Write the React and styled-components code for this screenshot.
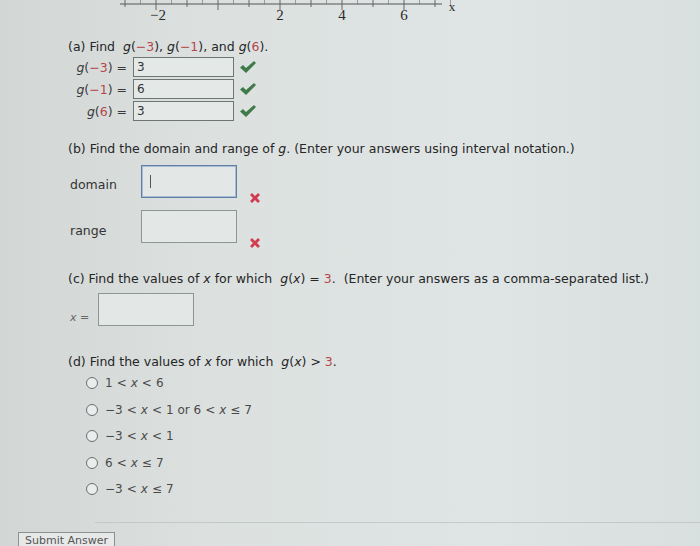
import React from "react";
import styled, { createGlobalStyle } from "styled-components";

const GlobalStyle = createGlobalStyle`
  html, body {
    margin: 0;
    padding: 0;
    background: #dbe1e0;
  }
  body {
    font-family: "DejaVu Sans", Verdana, sans-serif;
    color: #262626;
    overflow: hidden;
  }
`;

const Page = styled.div`
  width: 700px;
  height: 546px;
  position: relative;
  overflow: hidden;
  background: linear-gradient(90deg, #d2d6d5 0%, #dce1e0 30%, #dfe5e4 70%, #d8dfdf 100%);
`;

const Content = styled.div`
  padding-left: 68px;
  font-size: 12.5px;
`;

const Line = styled.div`
  height: 18px;
  line-height: 18px;
  margin-top: ${(p) => p.$mt || 0}px;
  white-space: nowrap;
`;

const G = styled.i`
  font-style: italic;
`;

const Op = styled.span`
  margin: 0 4px;
`;

const Red = styled.span`
  color: #b5464c;
`;

const EvalRows = styled.div`
  display: flex;
  flex-direction: column;
  gap: 2px;
  margin-top: 1px;
`;

const EvalRow = styled.div`
  display: grid;
  grid-template-columns: 59px 100px 24px;
  align-items: center;
  height: 20px;
  column-gap: 6px;
`;

const EvalLabel = styled.span`
  text-align: right;
  white-space: nowrap;
  color: #3a3a3a;
`;

const SmallBox = styled.div`
  height: 18px;
  width: 96px;
  border: 1px solid #6e7674;
  background: #e4e8e7;
  font-size: 12px;
  line-height: 18px;
  padding-left: 3px;
  color: #333;
`;

const AnswerRow = styled.div`
  display: flex;
  align-items: center;
  margin-top: ${(p) => p.$mt || 0}px;
  height: 33px;
`;

const AnswerLabel = styled.span`
  width: ${(p) => p.$w}px;
  padding-left: 2px;
  box-sizing: border-box;
  position: relative;
  top: ${(p) => p.$dy || 0}px;
  color: ${(p) => (p.$muted ? "#666" : "#333")};
  font-size: ${(p) => p.$fs || 12.5}px;
`;

const BigBox = styled.div`
  width: 96px;
  height: 33px;
  box-sizing: border-box;
  border: 1px solid ${(p) => (p.$focus ? "#5f7fa6" : "#8e9694")};
  box-shadow: ${(p) => (p.$focus ? "inset 0 0 0 1px #a9bdd2" : "none")};
  background: #e3e8e7;
  position: relative;
`;

const Caret = styled.div`
  position: absolute;
  left: 8px;
  top: 9px;
  width: 1px;
  height: 13px;
  background: #555;
`;

const Mark = styled.svg`
  margin-left: 12px;
  align-self: flex-end;
  margin-bottom: -6px;
`;

const Options = styled.div`
  display: flex;
  flex-direction: column;
  gap: 8.5px;
  margin-top: 3px;
  margin-left: 18px;
`;

const Option = styled.label`
  display: flex;
  align-items: center;
  height: 18px;
  font-size: 12px;
  color: #4a4a4a;
  white-space: pre;
`;

const Radio = styled.span`
  width: 10px;
  height: 10px;
  border: 1.5px solid #6a6f6e;
  border-radius: 50%;
  background: #e9eded;
  margin-right: 7px;
`;

const Rule = styled.div`
  position: absolute;
  left: 95px;
  right: 0;
  top: 522px;
  height: 1px;
  background: #c3c9c8;
`;

const SubmitButton = styled.div`
  position: absolute;
  left: 18px;
  top: 532px;
  width: 97px;
  height: 26px;
  box-sizing: border-box;
  border: 1px solid #8c9190;
  background: #e6e9e8;
  font-size: 11px;
  line-height: 12px;
  padding: 2px 6px;
  color: #555;
  white-space: nowrap;
`;

const Axis = () => {
  const x0 = 280 - 2 * 31;
  const ticks = [];
  for (let u = -3; u <= 7; u++) ticks.push(u);
  return (
    <svg width="700" height="30" style={{ display: "block" }}>
      <line x1="120" y1="4" x2="442" y2="4" stroke="#555" strokeWidth="1" />
      {ticks.map((u) => (
        <line
          key={u}
          x1={x0 + u * 31}
          y1="0"
          x2={x0 + u * 31}
          y2={u % 2 === 0 ? 10 : 7}
          stroke="#666"
          strokeWidth="1"
        />
      ))}
      {ticks.map((u) => (
        <line key={"h" + u} x1={x0 + u * 31 + 15.5} y1="0" x2={x0 + u * 31 + 15.5} y2="5" stroke="#888" strokeWidth="0.8" />
      ))}
      <g fontFamily="'Liberation Serif', serif" fontSize="15" fill="#2a2a2a" textAnchor="middle">
        <text x={x0 - 2 * 31 + 2} y="20">−2</text>
        <text x={x0 + 2 * 31} y="20">2</text>
        <text x={x0 + 4 * 31} y="20">4</text>
        <text x={x0 + 6 * 31} y="20">6</text>
        <text x="452" y="11" fontSize="13">x</text>
      </g>
    </svg>
  );
};

const Check = () => (
  <svg width="18" height="14" viewBox="0 0 18 14">
    <path d="M1 7.5 L4 5 L7 8 L15 1 L17 3 L7 13 Z" fill="#3f7b48" />
  </svg>
);

const Cross = () => (
  <Mark width="12" height="12" viewBox="0 0 12 12">
    <path d="M1 3 L3 1 L6 4 L9 1 L11 3 L8 6 L11 9 L9 11 L6 8 L3 11 L1 9 L4 6 Z" fill="#d23b50" />
  </Mark>
);

const evals = [
  { arg: "−3", val: "3" },
  { arg: "−1", val: "6" },
  { arg: "6", val: "3" },
];

const Lt = () => <Op>&lt;</Op>;
const Le = () => <Op>≤</Op>;
const X = () => <G>x</G>;

const options = [
  <>1<Lt /><X /><Lt />6</>,
  <>−3<Lt /><X /><Lt />1 or 6<Lt /><X /><Le />7</>,
  <>−3<Lt /><X /><Lt />1</>,
  <>6<Lt /><X /><Le />7</>,
  <>−3<Lt /><X /><Le />7</>,
];

export default function App() {
  return (
    <Page>
      <GlobalStyle />
      <Axis />
      <Content>
        <Line $mt={8}>
          (a) Find&nbsp; <G>g</G>(<Red>−3</Red>), <G>g</G>(<Red>−1</Red>), and <G>g</G>(<Red>6</Red>).
        </Line>
        <EvalRows>
          {evals.map((e) => (
            <EvalRow key={e.arg}>
              <EvalLabel>
                <G>g</G>(<Red>{e.arg}</Red>) =
              </EvalLabel>
              <SmallBox>{e.val}</SmallBox>
              <Check />
            </EvalRow>
          ))}
        </EvalRows>

        <Line $mt={19}>
          (b) Find the domain and range of <G>g</G>. (Enter your answers using interval notation.)
        </Line>
        <AnswerRow $mt={7}>
          <AnswerLabel $w={73} $dy={3}>domain</AnswerLabel>
          <BigBox $focus>
            <Caret />
          </BigBox>
          <Cross />
        </AnswerRow>
        <AnswerRow $mt={12}>
          <AnswerLabel $w={73} $dy={4}>range</AnswerLabel>
          <BigBox />
          <Cross />
        </AnswerRow>

        <Line $mt={27}>
          (c) Find the values of <G>x</G> for which&nbsp; <G>g</G>(<G>x</G>) = <Red>3</Red>.&nbsp; (Enter your answers as a comma-separated list.)
        </Line>
        <AnswerRow $mt={5}>
          <AnswerLabel $w={30} $dy={8} $muted $fs={11}>
            <G>x</G> =
          </AnswerLabel>
          <BigBox />
        </AnswerRow>

        <Line $mt={27}>
          (d) Find the values of <G>x</G> for which&nbsp; <G>g</G>(<G>x</G>) &gt; <Red>3</Red>.
        </Line>
        <Options>
          {options.map((o, i) => (
            <Option key={i}>
              <Radio />
              {o}
            </Option>
          ))}
        </Options>
      </Content>
      <Rule />
      <SubmitButton>Submit Answer</SubmitButton>
    </Page>
  );
}
